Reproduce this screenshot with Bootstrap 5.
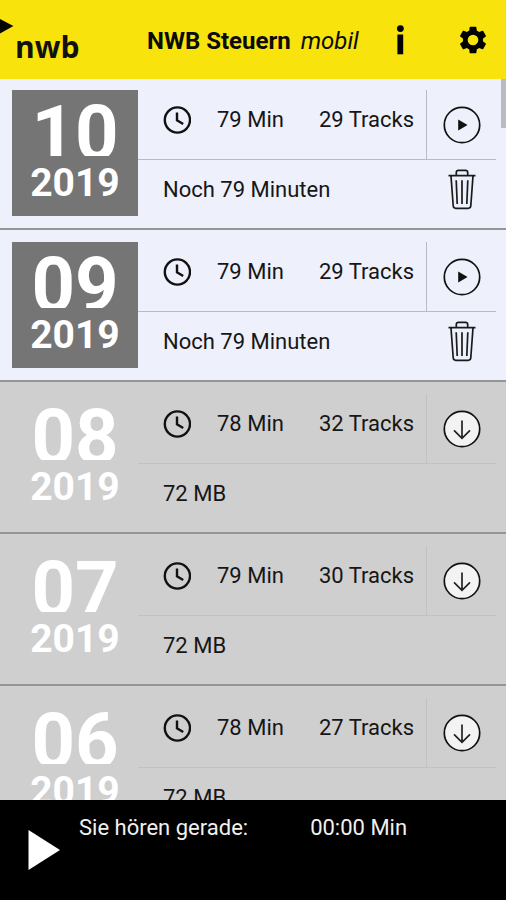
<!DOCTYPE html>
<html lang="de">
<head>
<meta charset="utf-8">
<meta name="viewport" content="width=device-width, initial-scale=1">
<title>NWB Steuern mobil</title>
<link href="https://cdn.jsdelivr.net/npm/bootstrap@5.3.0/dist/css/bootstrap.min.css" rel="stylesheet">
<style>
  body { font-family: Roboto, "Liberation Sans", sans-serif; font-size: 22px; line-height: 28px; color: #161616; background: #cfcfcf; }
  svg { display: block; }
  .app-bar { height: 79px; margin-bottom: -1px; padding-right: 17px; z-index: 1; background: #f8e30c; color: #0b0b0b; }
  .brand-link { width: 139px; padding: 14px 0 0 15px; font: 700 30px/44px "Open Sans", sans-serif; color: #111; }
  .brand-arrow { position: absolute; left: 0; top: 19px; }
  .app-title { font-size: 24px; line-height: 30px; padding-top: 2px; }
  .bare-btn { padding: 0; border: 0; background: none; color: inherit; }
  .info-btn { margin-right: 52px; }
  .issues { scrollbar-width: none; }
  .issues::-webkit-scrollbar { display: none; }
  .scroll-thumb { position: absolute; top: 0; right: 0; width: 5px; height: 50px; background: #bbbbbf; }
  .issue { padding: 12px 10px 12px 12px; border-bottom: 2px solid #959595; background: #cfcfcf; --rule: #c2c2c2; }
  .issue.loaded { background: #eef0fb; --rule: #b9bac2; }
  .tile { width: 126px; height: 126px; padding-top: 2px; color: #fff; font-weight: 700; text-align: center; }
  .loaded .tile { background: #757575; }
  .month { height: 64px; font-size: 76px; line-height: 82px; overflow: hidden; }
  .year { font-size: 39px; line-height: 55px; }
  .upper { height: 70px; border-bottom: 1px solid var(--rule); }
  .facts { padding: 0 12px 10px 25px; border-right: 1px solid var(--rule); }
  .clock-icon { margin-right: 26px; }
  .side { width: 69px; }
  .lower { height: 56px; padding: 3px 0 0 25px; }
  .player { height: 100px; color: #f0f0f0; background: #000; padding: 14px 28px; }
  .now { padding-left: 19px; gap: 62px; }
</style>
<script src="https://cdn.jsdelivr.net/npm/bootstrap@5.3.0/dist/js/bootstrap.bundle.min.js"></script>
</head>
<body>
<svg width="0" height="0" class="position-absolute" aria-hidden="true">
  <symbol id="clock" viewBox="0 0 28 28"><g fill="none" stroke="#111" stroke-width="2.4"><circle cx="14.4" cy="14" r="12.6"/><path d="M14 6.6V14.4L20.2 18"/></g></symbol>
  <symbol id="play" viewBox="0 0 38 38"><circle cx="19" cy="19" r="17.7" fill="none" stroke="#111" stroke-width="1.7"/><path d="M15.2 13.4L24.6 19L15.2 24.6Z" fill="#111"/></symbol>
  <symbol id="load" viewBox="0 0 38 38"><circle cx="19" cy="19" r="17.7" fill="#f3f3f3" stroke="#111" stroke-width="1.7"/><path d="M19 10.4V28.2M11 20.4L19 28.4L27 20.4" fill="none" stroke="#222" stroke-width="1.7"/></symbol>
  <symbol id="trash" viewBox="0 0 28 41"><g fill="none" stroke="#1a1a1a" stroke-width="1.7"><path d="M0.5 6.6H27.5M8.3 6.4V3.4Q8.3 1.3 10.4 1.3H17.6Q19.7 1.3 19.7 3.4V6.4M3 7L5.2 36.8Q5.4 39.3 7.8 39.3H20.2Q22.6 39.3 22.8 36.8L25 7M8.2 11.2L9.2 35M14 11.2V35M19.8 11.2L18.8 35"/></g></symbol>
</svg>
<div class="d-flex flex-column vh-100">
  <header class="app-bar position-relative d-flex align-items-center flex-shrink-0">
    <svg class="brand-arrow" width="14" height="15" viewBox="0 0 14 15" aria-hidden="true"><path d="M0 0L13.4 7L0 14.4Z" fill="#050505"/></svg>
    <a href="#" class="brand-link text-decoration-none flex-shrink-0">nwb</a>
    <h1 class="app-title flex-grow-1 mb-0 ps-2 text-nowrap fw-normal"><b>NWB Steuern</b> <i class="ms-1">mobil</i></h1>
    <button class="bare-btn info-btn" aria-label="Info"><svg width="10" height="30" viewBox="0 0 10 30"><circle cx="5.4" cy="3.6" r="3.4"/><path d="M2.4 9.5H8.2V29.3H2.4Z"/></svg></button>
    <button class="bare-btn" aria-label="Einstellungen"><svg width="32" height="32" viewBox="0 0 24 24"><path d="M19.43 12.98c.04-.32.07-.64.07-.98s-.03-.66-.07-.98l2.11-1.65c.19-.15.24-.42.12-.64l-2-3.46c-.12-.22-.39-.3-.61-.22l-2.49 1c-.52-.4-1.08-.73-1.69-.98l-.38-2.65C14.46 2.18 14.25 2 14 2h-4c-.25 0-.46.18-.49.42l-.38 2.65c-.61.25-1.17.59-1.69.98l-2.49-1c-.23-.09-.49 0-.61.22l-2 3.46c-.13.22-.07.49.12.64l2.11 1.65c-.04.32-.07.65-.07.98s.03.66.07.98l-2.11 1.65c-.19.15-.24.42-.12.64l2 3.46c.12.22.39.3.61.22l2.49-1c.52.4 1.08.73 1.69.98l.38 2.65c.03.24.24.42.49.42h4c.25 0 .46-.18.49-.42l.38-2.65c.61-.25 1.17-.59 1.69-.98l2.49 1c.23.09.49 0 .61-.22l2-3.46c.12-.22.07-.49-.12-.64zM12 16a4 4 0 1 1 0-8a4 4 0 0 1 0 8z"/></svg></button>
  </header>
  <main class="position-relative flex-grow-1 overflow-hidden">
    <div class="issues h-100 overflow-auto">
      <article class="issue loaded d-flex">
        <div class="tile flex-shrink-0"><div class="month">10</div><div class="year">2019</div></div>
        <div class="flex-grow-1">
          <div class="upper d-flex">
            <div class="facts flex-grow-1 d-flex align-items-center"><svg class="clock-icon" width="28" height="28"><use href="#clock"/></svg><span>79 Min</span><span class="ms-auto">29 Tracks</span></div>
            <div class="side d-flex align-items-center justify-content-center"><button class="bare-btn" aria-label="Abspielen"><svg width="38" height="38"><use href="#play"/></svg></button></div>
          </div>
          <div class="lower d-flex align-items-center"><span class="flex-grow-1">Noch 79 Minuten</span><span class="side d-flex justify-content-center"><button class="bare-btn" aria-label="Löschen"><svg width="28" height="41"><use href="#trash"/></svg></button></span></div>
        </div>
      </article>
      <article class="issue loaded d-flex">
        <div class="tile flex-shrink-0"><div class="month">09</div><div class="year">2019</div></div>
        <div class="flex-grow-1">
          <div class="upper d-flex">
            <div class="facts flex-grow-1 d-flex align-items-center"><svg class="clock-icon" width="28" height="28"><use href="#clock"/></svg><span>79 Min</span><span class="ms-auto">29 Tracks</span></div>
            <div class="side d-flex align-items-center justify-content-center"><button class="bare-btn" aria-label="Abspielen"><svg width="38" height="38"><use href="#play"/></svg></button></div>
          </div>
          <div class="lower d-flex align-items-center"><span class="flex-grow-1">Noch 79 Minuten</span><span class="side d-flex justify-content-center"><button class="bare-btn" aria-label="Löschen"><svg width="28" height="41"><use href="#trash"/></svg></button></span></div>
        </div>
      </article>
      <article class="issue d-flex">
        <div class="tile flex-shrink-0"><div class="month">08</div><div class="year">2019</div></div>
        <div class="flex-grow-1">
          <div class="upper d-flex">
            <div class="facts flex-grow-1 d-flex align-items-center"><svg class="clock-icon" width="28" height="28"><use href="#clock"/></svg><span>78 Min</span><span class="ms-auto">32 Tracks</span></div>
            <div class="side d-flex align-items-center justify-content-center"><button class="bare-btn" aria-label="Herunterladen"><svg width="38" height="38"><use href="#load"/></svg></button></div>
          </div>
          <div class="lower d-flex align-items-center">72 MB</div>
        </div>
      </article>
      <article class="issue d-flex">
        <div class="tile flex-shrink-0"><div class="month">07</div><div class="year">2019</div></div>
        <div class="flex-grow-1">
          <div class="upper d-flex">
            <div class="facts flex-grow-1 d-flex align-items-center"><svg class="clock-icon" width="28" height="28"><use href="#clock"/></svg><span>79 Min</span><span class="ms-auto">30 Tracks</span></div>
            <div class="side d-flex align-items-center justify-content-center"><button class="bare-btn" aria-label="Herunterladen"><svg width="38" height="38"><use href="#load"/></svg></button></div>
          </div>
          <div class="lower d-flex align-items-center">72 MB</div>
        </div>
      </article>
      <article class="issue d-flex">
        <div class="tile flex-shrink-0"><div class="month">06</div><div class="year">2019</div></div>
        <div class="flex-grow-1">
          <div class="upper d-flex">
            <div class="facts flex-grow-1 d-flex align-items-center"><svg class="clock-icon" width="28" height="28"><use href="#clock"/></svg><span>78 Min</span><span class="ms-auto">27 Tracks</span></div>
            <div class="side d-flex align-items-center justify-content-center"><button class="bare-btn" aria-label="Herunterladen"><svg width="38" height="38"><use href="#load"/></svg></button></div>
          </div>
          <div class="lower d-flex align-items-center">72 MB</div>
        </div>
      </article>
    </div>
    <div class="scroll-thumb"></div>
  </main>
  <footer class="player d-flex flex-shrink-0">
    <button class="bare-btn align-self-center" aria-label="Wiedergabe"><svg width="32" height="40" viewBox="0 0 32 40"><path d="M.5 0L32 20L.5 40Z" fill="#fff"/></svg></button>
    <div class="now d-flex text-nowrap"><span>Sie hören gerade:</span><span>00:00 Min</span></div>
  </footer>
</div>
</body>
</html>
